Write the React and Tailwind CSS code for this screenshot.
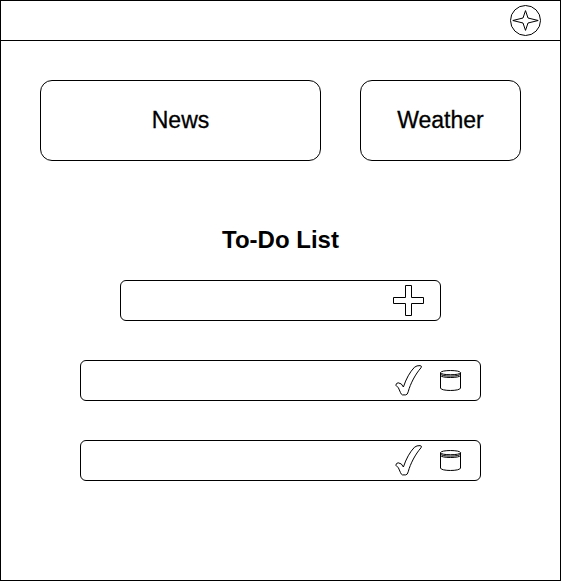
function CompassIcon() {
  return (
    <svg className="h-8 w-8" viewBox="0 0 32 32" fill="none" stroke="#000">
      <circle cx="15.5" cy="15.5" r="15" />
      <path d="M2.8 15.5L13 13L15.5 5.6L18 13L28.2 15.5L18 18L15.5 25.4L13 18Z" />
    </svg>
  );
}

function PlusIcon() {
  return (
    <svg className="h-[31px] w-[31px]" viewBox="0 0 31 31" fill="none" stroke="#000">
      <path d="M.5 12.5H12.5V.5H18.5V12.5H30.5V18.5H18.5V30.5H12.5V18.5H.5Z" />
    </svg>
  );
}

function CheckIcon() {
  return (
    <svg className="h-[31px] w-7" viewBox="0 0 28 31" fill="none" stroke="#000">
      <path d="M.8 20.2Q1.3 17.9 3.2 17.8Q6.8 18 8.4 22Q12.5 9.5 19.5 2.2Q21.8 .4 25 .6Q27.4 .9 26 2.8C20.5 9 15.4 18.5 13.2 26.8Q12.5 29.8 10.7 29.9H7.4Q6.3 29.6 5.4 27.4Q3.8 22 .8 20.2Z" />
    </svg>
  );
}

function BinIcon() {
  return (
    <svg className="h-[21px] w-[22px]" viewBox="0 0 22 21" fill="none" stroke="#000">
      <path d="M.5 2.7C.5-.2 20.5-.2 20.5 2.7V18C20.5 21.3 .5 21.3 .5 18Z" />
      <path d="M.5 2.7C.5 5.4 20.5 5.4 20.5 2.7" />
      <path d="M.5 4C.5 6.8 20.5 6.8 20.5 4" />
      <path d="M.5 5.4C.5 8.2 20.5 8.2 20.5 5.4" />
    </svg>
  );
}

function TodoItem() {
  return (
    <li className="flex h-[41px] w-[401px] items-center justify-end rounded-md border border-black pr-[18px]">
      <CheckIcon />
      <span className="w-[17px]" />
      <BinIcon />
    </li>
  );
}

export default function App() {
  return (
    <div
      className="flex h-[581px] w-[561px] flex-col border border-black bg-white text-2xl text-black"
      style={{ fontFamily: '"Liberation Sans", Arial, Helvetica, sans-serif' }}
    >
      <header className="flex h-10 items-center justify-end border-b border-black pr-[18px]">
        <CompassIcon />
      </header>
      <main className="flex flex-col items-center pt-[39px]">
        <section className="flex gap-[39px] text-[23px] [-webkit-text-stroke:0.3px_black]">
          <div className="flex h-[81px] w-[281px] items-center justify-center rounded-xl border border-black">
            News
          </div>
          <div className="flex h-[81px] w-[161px] items-center justify-center rounded-xl border border-black">
            Weather
          </div>
        </section>
        <h1 className="mt-[63px] font-bold">To-Do List</h1>
        <div className="mt-6 flex h-[41px] w-[321px] items-center justify-end rounded-md border border-black pr-4">
          <PlusIcon />
        </div>
        <ul className="mt-[39px] flex flex-col gap-[39px]">
          <TodoItem />
          <TodoItem />
        </ul>
      </main>
    </div>
  );
}
